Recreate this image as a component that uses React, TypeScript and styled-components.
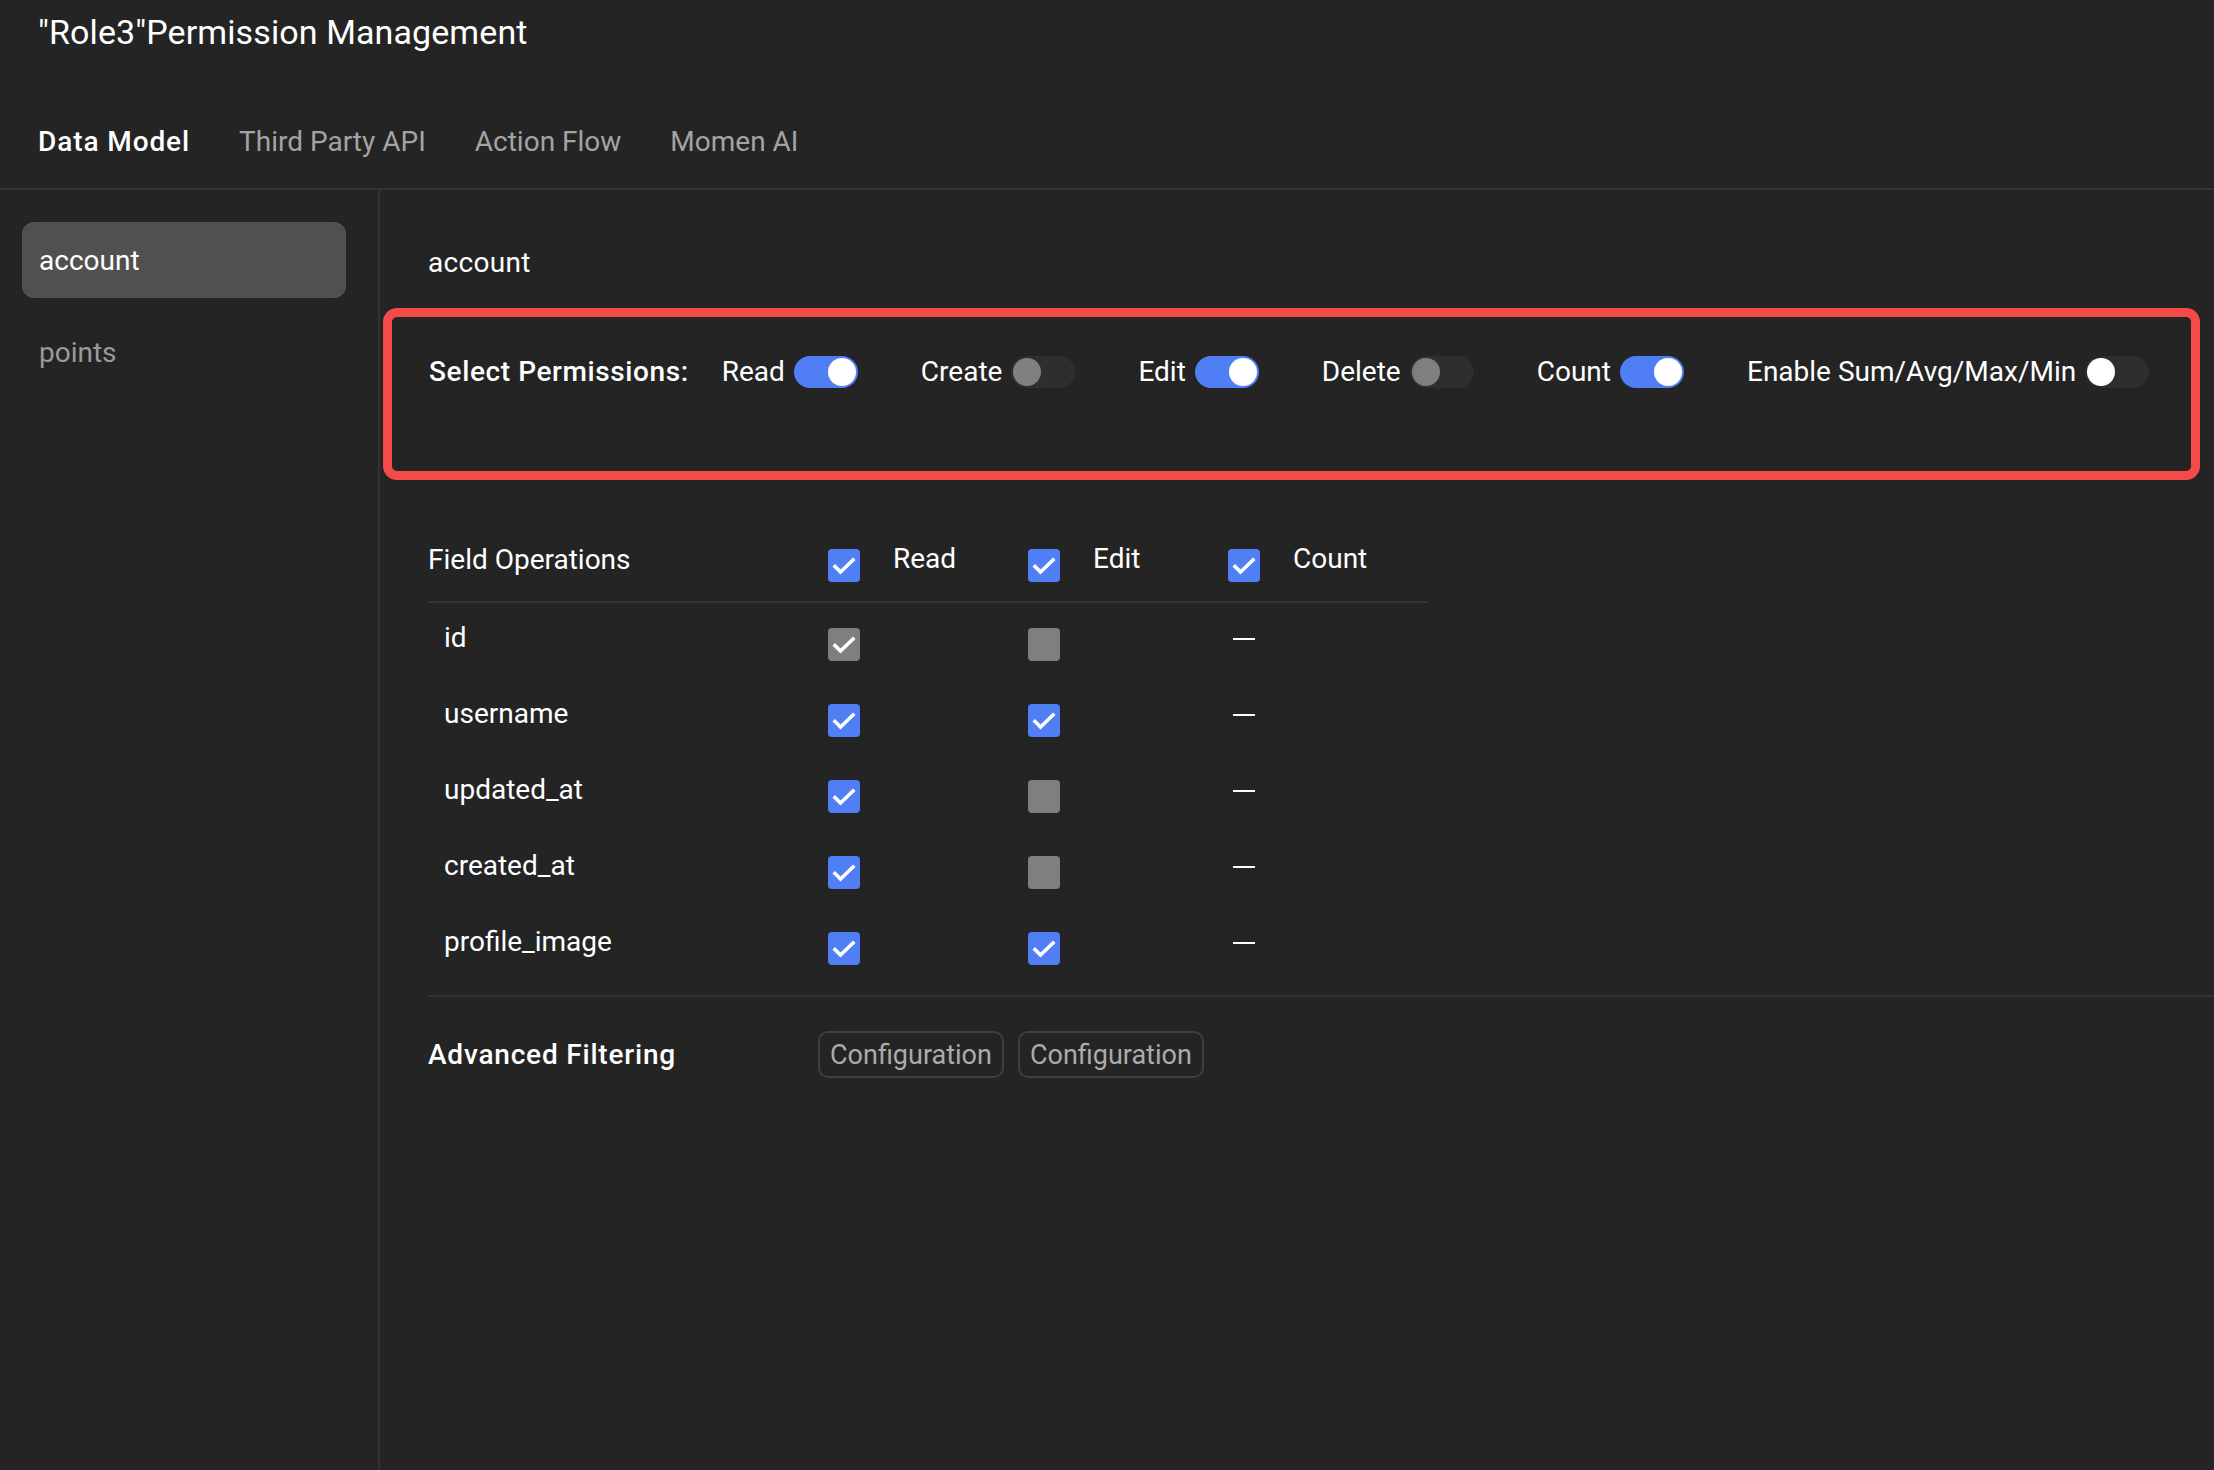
import React, { useState } from 'react'
import styled, { createGlobalStyle } from 'styled-components'

const COLORS = {
  bg: '#242424',
  line: '#333333',
  blue: '#4f7ef5',
  gray: '#7f7f7f',
  track: '#2e2e2e',
  red: '#f44a4a',
  text: '#ffffff',
  muted: '#a3a3a3',
};

const GlobalStyle = createGlobalStyle`
  html, body {
    margin: 0;
    padding: 0;
    background: ${COLORS.bg};
    color: ${COLORS.text};
    font-family: Roboto, "Noto Sans", "Liberation Sans", sans-serif;
  }
  * { box-sizing: border-box; }
`;

const Page = styled.div`
  min-height: 100vh;
  display: flex;
  flex-direction: column;
  background: ${COLORS.bg};
`;

const Header = styled.header`
  padding: 12px 38px 0;
  border-bottom: 2px solid ${COLORS.line};
`;

const Title = styled.h1`
  margin: 0;
  font-size: 34px;
  line-height: 40px;
  font-weight: 400;
  letter-spacing: 0.1px;
  color: ${COLORS.text};
`;

const Tabs = styled.nav`
  display: flex;
  gap: 49px;
  margin-top: 70px;
  padding-bottom: 26px;
`;

const Tab = styled.span<{ $active?: boolean }>`
  font-size: 28px;
  line-height: 40px;
  font-weight: ${(p) => (p.$active ? 500 : 400)};
  letter-spacing: ${(p) => (p.$active ? '0.9px' : '0')};
  color: ${(p) => (p.$active ? COLORS.text : COLORS.muted)};
  cursor: pointer;
`;

const Body = styled.div`
  flex: 1;
  display: flex;
`;

const Sidebar = styled.aside`
  width: 380px;
  flex-shrink: 0;
  border-right: 2px solid ${COLORS.line};
  padding: 32px 32px 0 22px;
  display: flex;
  flex-direction: column;
  gap: 16px;
`;

const SideItem = styled.div<{ $active?: boolean }>`
  height: 76px;
  display: flex;
  align-items: center;
  padding-left: 17px;
  border-radius: 12px;
  font-size: 28px;
  background: ${(p) => (p.$active ? '#505050' : 'transparent')};
  color: ${(p) => (p.$active ? COLORS.text : '#9a9a9a')};
`;

const Main = styled.main`
  flex: 1;
  padding: 53px 0 0 3px;
`;

const Section = styled.div`
  padding-left: 45px;
`;

const Heading = styled.div`
  font-size: 28px;
  line-height: 40px;
  letter-spacing: 0.3px;
  margin-bottom: 25px;
`;

const PermBox = styled.div`
  margin-right: 14px;
  border: 9px solid ${COLORS.red};
  border-radius: 14px;
  padding: 35px 0 79px 37px;
  display: flex;
  align-items: center;
`;

const PermLabel = styled.span`
  font-size: 28px;
  line-height: 40px;
  font-weight: 500;
  letter-spacing: 0.6px;
  margin-right: 33px;
`;

const PermList = styled.div`
  display: flex;
  align-items: center;
  gap: 63px;
`;

const PermItem = styled.label`
  display: flex;
  align-items: center;
  gap: 9px;
  font-size: 28px;
  line-height: 40px;
  cursor: pointer;
`;

const Track = styled.span<{ $on: boolean }>`
  position: relative;
  width: 64px;
  height: 32px;
  border-radius: 16px;
  background: ${(p) => (p.$on ? COLORS.blue : COLORS.track)};
`;

const Knob = styled.span<{ $on: boolean; $white?: boolean }>`
  position: absolute;
  top: 2px;
  left: ${(p) => (p.$on ? '34px' : '2px')};
  width: 28px;
  height: 28px;
  border-radius: 50%;
  background: ${(p) => (p.$on || p.$white ? '#ffffff' : COLORS.gray)};
`;

const Table = styled.div`
  width: 1000px;
  margin-top: 60px;
  margin-bottom: 12px;
`;

const HeadRow = styled.div`
  display: flex;
  align-items: flex-start;
  padding-bottom: 19px;
  border-bottom: 2px solid ${COLORS.line};
`;

const Row = styled.div`
  display: flex;
  align-items: flex-start;
  height: 76px;
`;

const NameCell = styled.div<{ $indent?: boolean }>`
  width: 400px;
  padding-top: ${(p) => (p.$indent ? '15px' : '0')};
  padding-left: ${(p) => (p.$indent ? '16px' : '0')};
  font-size: 28px;
  line-height: 40px;
`;

const OpCell = styled.div<{ $top: number }>`
  width: 200px;
  display: flex;
  align-items: flex-start;
  padding-top: ${(p) => p.$top}px;
`;

const OpLabel = styled.span`
  font-size: 28px;
  line-height: 40px;
  margin-left: 33px;
  margin-top: -10px;
`;

const Box = styled.span<{ $on: boolean; $disabled?: boolean }>`
  width: 32px;
  height: 33px;
  border-radius: 4px;
  display: flex;
  align-items: center;
  justify-content: center;
  background: ${(p) => (p.$disabled ? COLORS.gray : p.$on ? COLORS.blue : 'transparent')};
  border: ${(p) => (p.$on || p.$disabled ? 'none' : `2px solid ${COLORS.gray}`)};
`;

const Dash = styled.span`
  width: 22px;
  height: 2px;
  margin: 35px 0 0 5px;
  background: ${COLORS.text};
`;

const Divider = styled.div`
  margin-left: 45px;
  border-top: 2px solid ${COLORS.line};
`;

const FilterRow = styled.div`
  display: flex;
  align-items: center;
  padding-top: 34px;
`;

const FilterLabel = styled.span`
  width: 390px;
  font-size: 28px;
  font-weight: 500;
  letter-spacing: 0.8px;
`;

const ConfigButton = styled.button`
  height: 47px;
  padding: 0 10px;
  margin-right: 14px;
  background: transparent;
  border: 2px solid #3f3f3f;
  border-radius: 10px;
  color: #ababab;
  font-family: inherit;
  font-size: 27px;
  cursor: pointer;
`;

function Check({ on, disabled }: { on: boolean; disabled?: boolean }) {
  return (
    <Box $on={on} $disabled={disabled}>
      {on && (
        <svg width="32" height="33" viewBox="0 0 32 33">
          <path d="M7 17.5 L12.5 23 L25 11" fill="none" stroke="#fff" strokeWidth="3.6" strokeLinecap="square" />
        </svg>
      )}
    </Box>
  );
}

const PERMS = [
  { name: 'Read', on: true },
  { name: 'Create', on: false },
  { name: 'Edit', on: true },
  { name: 'Delete', on: false },
  { name: 'Count', on: true },
  { name: 'Enable Sum/Avg/Max/Min', on: false, white: true },
];

const FIELDS = [
  { name: 'id', read: true, readLocked: true, edit: false, editLocked: true },
  { name: 'username', read: true, edit: true },
  { name: 'updated_at', read: true, edit: false, editLocked: true },
  { name: 'created_at', read: true, edit: false, editLocked: true },
  { name: 'profile_image', read: true, edit: true },
];

export default function App() {
  const [perms, setPerms] = useState(PERMS);
  const toggle = (i: number) =>
    setPerms(perms.map((p, j) => (j === i ? { ...p, on: !p.on } : p)));

  return (
    <Page>
      <GlobalStyle />
      <Header>
        <Title>"Role3"Permission Management</Title>
        <Tabs>
          <Tab $active>Data Model</Tab>
          <Tab>Third Party API</Tab>
          <Tab>Action Flow</Tab>
          <Tab>Momen AI</Tab>
        </Tabs>
      </Header>

      <Body>
        <Sidebar>
          <SideItem $active>account</SideItem>
          <SideItem>points</SideItem>
        </Sidebar>

        <Main>
          <Section>
            <Heading>account</Heading>
          </Section>

          <PermBox>
            <PermLabel>Select Permissions:</PermLabel>
            <PermList>
              {perms.map((p, i) => (
                <PermItem key={p.name} onClick={() => toggle(i)}>
                  {p.name}
                  <Track $on={p.on}>
                    <Knob $on={p.on} $white={p.white} />
                  </Track>
                </PermItem>
              ))}
            </PermList>
          </PermBox>

          <Section>
            <Table>
              <HeadRow>
                <NameCell>Field Operations</NameCell>
                <OpCell $top={9}>
                  <Check on />
                  <OpLabel>Read</OpLabel>
                </OpCell>
                <OpCell $top={9}>
                  <Check on />
                  <OpLabel>Edit</OpLabel>
                </OpCell>
                <OpCell $top={9}>
                  <Check on />
                  <OpLabel>Count</OpLabel>
                </OpCell>
              </HeadRow>
              {FIELDS.map((f) => (
                <Row key={f.name}>
                  <NameCell $indent>{f.name}</NameCell>
                  <OpCell $top={25}>
                    <Check on={f.read} disabled={f.readLocked} />
                  </OpCell>
                  <OpCell $top={25}>
                    <Check on={f.edit} disabled={f.editLocked} />
                  </OpCell>
                  <OpCell $top={0}>
                    <Dash />
                  </OpCell>
                </Row>
              ))}
            </Table>
          </Section>

          <Divider />

          <Section>
            <FilterRow>
              <FilterLabel>Advanced Filtering</FilterLabel>
              <ConfigButton>Configuration</ConfigButton>
              <ConfigButton>Configuration</ConfigButton>
            </FilterRow>
          </Section>
        </Main>
      </Body>
    </Page>
  );
}
